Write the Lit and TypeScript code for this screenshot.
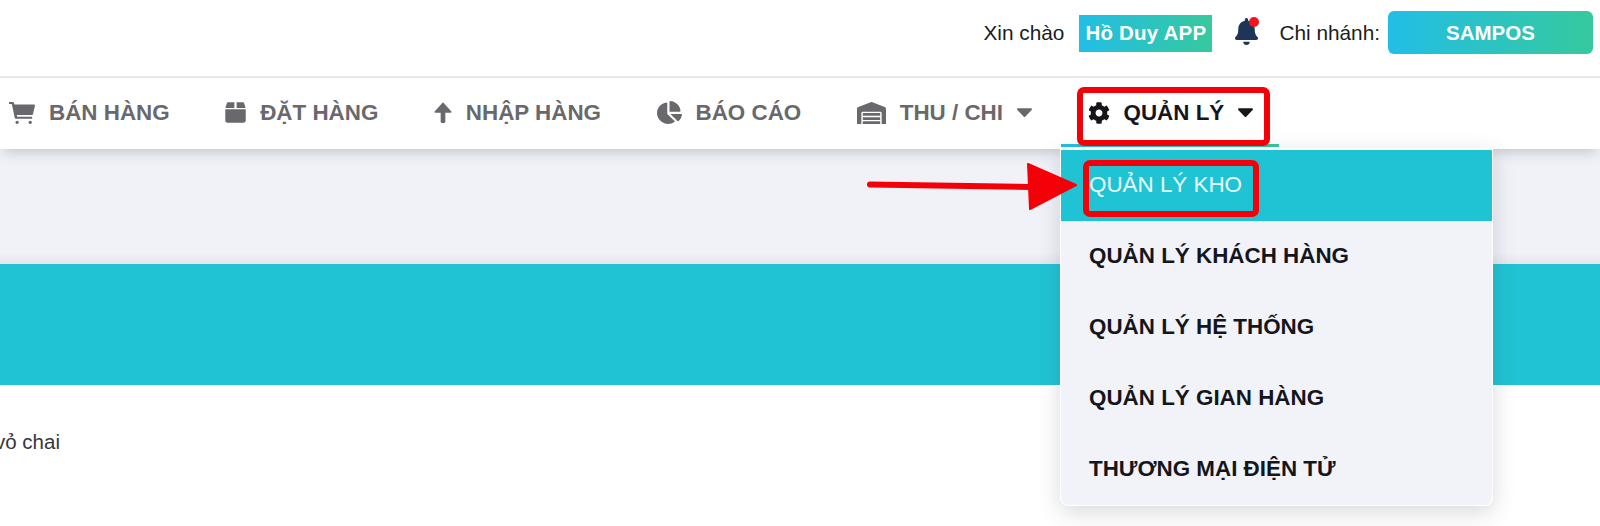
import { LitElement, html, css, svg } from "lit";
import { customElement } from "lit/decorators.js";

const P = {
  cart: "M0 0h88c10 0 17 6 20 16l12 40h436c14 0 22 12 19 26l-42 200c-3 13-12 22-26 22H172l10 40h330v44H148c-10 0-17-6-20-16L62 44H0zM180 436a38 38 0 1 1 0 76a38 38 0 1 1 0-76zM470 436a38 38 0 1 1 0 76a38 38 0 1 1 0-76z",
  box: "M70 24h130v130H8l30-100c5-18 16-30 32-30zM248 24h130c16 0 27 12 32 30l30 100H248zM6 184h436v250c0 30-20 50-50 50H56c-30 0-50-20-50-50z",
  up: "M224 24L432 236c10 12 3 30-13 30H282v200c0 22-18 36-36 36h-44c-18 0-36-14-36-36V266H29c-16 0-23-18-13-30z",
  pie: "M527.79 288H290.5l158.03 158.03c6.04 6.04 15.98 6.53 22.19.68 38.7-36.46 65.32-85.61 73.13-140.86 1.34-9.46-6.51-17.85-16.06-17.85zm-15.83-64.8C503.72 103.74 408.26 8.28 288.8.04 279.68-.59 272 7.1 272 16.24V240h223.77c9.14 0 16.82-7.68 16.19-16.8zM224 288V50.71c0-9.55-8.39-17.4-17.84-16.06C86.99 51.49-4.1 155.6.14 280.37 4.5 408.51 114.83 513.59 243.03 511.98c50.4-.63 96.97-16.87 135.26-44.03 7.9-5.6 8.42-17.23 1.57-24.08L224 288z",
  garage: "M504 352H136.4c-4.4 0-8 3.6-8 8l-.1 48c0 4.4 3.6 8 8 8H504c4.4 0 8-3.6 8-8v-48c0-4.4-3.6-8-8-8zm0 96H136.1c-4.4 0-8 3.6-8 8l-.1 48c0 4.4 3.6 8 8 8h368c4.4 0 8-3.6 8-8v-48c0-4.4-3.6-8-8-8zm0-192H136.6c-4.4 0-8 3.6-8 8l-.1 48c0 4.4 3.6 8 8 8H504c4.4 0 8-3.6 8-8v-48c0-4.4-3.6-8-8-8zm106.5-139L338.4 3.7a48.15 48.15 0 0 0-36.9 0L29.5 117C11.7 124.5 0 141.9 0 161.3V504c0 4.4 3.6 8 8 8h80c4.4 0 8-3.6 8-8V256c0-17.6 14.6-32 32.6-32h382.8c18 0 32.6 14.4 32.6 32v248c0 4.4 3.6 8 8 8h80c4.4 0 8-3.6 8-8V161.3c0-19.4-11.7-36.8-29.5-44.3z",
  cog: "M487.4 315.7l-42.6-24.6c4.3-23.2 4.3-47 0-70.2l42.6-24.6c4.9-2.8 7.1-8.6 5.5-14-11.1-35.6-30-67.8-54.7-94.6-3.8-4.1-10-5.1-14.8-2.3L380.8 110c-17.9-15.4-38.5-27.3-60.8-35.1V25.8c0-5.6-3.9-10.5-9.4-11.7-36.7-8.2-74.3-7.8-109.2 0-5.5 1.2-9.4 6.1-9.4 11.7V75c-22.2 7.9-42.8 19.8-60.8 35.1L88.7 85.5c-4.9-2.8-11-1.9-14.8 2.3-24.7 26.7-43.6 58.9-54.7 94.6-1.7 5.4.6 11.2 5.5 14L67.3 221c-4.3 23.2-4.3 47 0 70.2l-42.6 24.6c-4.9 2.8-7.1 8.6-5.5 14 11.1 35.6 30 67.8 54.7 94.6 3.8 4.1 10 5.1 14.8 2.3l42.6-24.6c17.9 15.4 38.5 27.3 60.8 35.1v49.2c0 5.6 3.9 10.5 9.4 11.7 36.7 8.2 74.3 7.8 109.2 0 5.5-1.2 9.4-6.1 9.4-11.7v-49.2c22.2-7.9 42.8-19.8 60.8-35.1l42.6 24.6c4.9 2.8 11 1.9 14.8-2.3 24.7-26.7 43.6-58.9 54.7-94.6 1.5-5.5-.7-11.3-5.6-14.1zM256 336c-44.1 0-80-35.9-80-80s35.9-80 80-80 80 35.9 80 80-35.9 80-80 80z",
  bell: "M224 512c35.32 0 63.97-28.65 63.97-64H160.03c0 35.35 28.65 64 63.97 64zm215.39-149.71c-19.32-20.76-55.47-51.99-55.47-154.29 0-77.7-54.48-139.9-127.94-155.16V32c0-17.67-14.32-32-31.98-32s-31.98 14.33-31.98 32v20.84C118.56 68.1 64.08 130.3 64.08 208c0 102.3-36.15 133.53-55.47 154.29-6 6.45-8.66 14.16-8.61 21.71.11 16.4 12.98 32 32.1 32h383.8c19.12 0 32-15.6 32.1-32 .05-7.55-2.61-15.27-8.61-21.71z",
  caret: "M31.3 192h257.3c17.8 0 26.7 21.5 14.1 34.1L174.1 354.8c-7.8 7.8-20.5 7.8-28.3 0L17.2 226.1C4.6 213.5 13.5 192 31.3 192z",
};

const icon = (d: string, vb: string, w: number, h: number) => html`<svg
  class="ic"
  viewBox=${vb}
  width=${w}
  height=${h}
  preserveAspectRatio="none"
  fill="currentColor"
>${svg`<path d=${d}></path>`}</svg>`;

const caret = () => icon(P.caret, "10 188 300 172", 15, 9);

@customElement("app-root")
export class AppRoot extends LitElement {
  static styles = css`
    :host {
      display: block;
      font-family: "Liberation Sans", Arial, sans-serif;
    }
    .page {
      position: relative;
      height: 526px;
      overflow: hidden;
      background: #fff;
    }
    .top {
      box-sizing: border-box;
      height: 78px;
      border-bottom: 2px solid #e9e9ec;
      display: flex;
      align-items: center;
      justify-content: flex-end;
      padding: 0 7px 10px 0;
      font-size: 20.8px;
      color: #1c1c22;
    }
    .grad {
      background: linear-gradient(90deg, #22bee6, #36c99d);
      color: #fff;
      font-weight: 700;
      font-size: 20.5px;
    }
    .who {
      margin-left: 15px;
      width: 133px;
      height: 37px;
      display: flex;
      align-items: center;
      justify-content: center;
      letter-spacing: 0.2px;
    }
    .bell {
      position: relative;
      margin-left: 23px;
      margin-right: 21px;
      width: 23px;
      height: 27px;
      color: #1d3557;
      margin-top: -3px;
      display: flex;
    }
    .dot {
      position: absolute;
      left: 14px;
      top: -1px;
      width: 10px;
      height: 10px;
      border-radius: 50%;
      background: #f5141e;
    }
    .branch {
      margin-left: 8px;
      width: 205px;
      height: 43px;
      border-radius: 6px;
      display: flex;
      align-items: center;
      justify-content: center;
      margin-top: -1px;
    }
    .nav {
      position: relative;
      z-index: 1;
      box-sizing: border-box;
      height: 71px;
      padding: 0 0 2px 9px;
      background: #fff;
      box-shadow: 0 7px 12px -4px rgba(60, 64, 80, 0.26);
      display: flex;
      align-items: center;
      gap: 55.5px;
      font-size: 22.4px;
      font-weight: 700;
      color: #68686d;
    }
    .item {
      position: relative;
      display: flex;
      align-items: center;
      gap: 14px;
      white-space: nowrap;
    }
    .item .ic {
      flex: none;
    }
    .active {
      color: #14161c;
    }
    .active::after {
      content: "";
      position: absolute;
      left: -27px;
      right: -26px;
      top: 44px;
      height: 3px;
      background: linear-gradient(90deg, #22bee6, #36c99d);
    }
    .gapfill {
      height: 115px;
      background: linear-gradient(#f0f2f8 90%, #e4e6eb);
    }
    .band {
      height: 121px;
      background: #20c3d3;
    }
    .note {
      margin: 0;
      padding-top: 45px;
      margin-left: -5px;
      font-size: 20.5px;
      color: #34363c;
    }
    .menu {
      position: absolute;
      z-index: 2;
      left: 1060px;
      top: 148px;
      width: 433px;
      height: 358px;
      box-sizing: border-box;
      border: 1px solid #fff;
      border-top-width: 2px;
      background: #f1f3f9;
      border-radius: 0 0 8px 8px;
      box-shadow: 0 6px 22px rgba(60, 64, 80, 0.2);
      font-size: 22.4px;
      font-weight: 700;
      color: #14161c;
    }
    .mi {
      height: 71px;
      box-sizing: border-box;
      padding: 0 0 1px 28px;
      display: flex;
      align-items: center;
    }
    .mi.on {
      background: #20c3d3;
      color: #e8fbfd;
      font-weight: 400;
    }
    .mark {
      position: absolute;
      z-index: 3;
      box-sizing: border-box;
      border: 6px solid #f40008;
      border-radius: 7px;
    }
    .m1 {
      left: 1077px;
      top: 87px;
      width: 193px;
      height: 59px;
    }
    .m2 {
      left: 1083px;
      top: 160px;
      width: 176px;
      height: 57px;
    }
    .arrow {
      position: absolute;
      z-index: 3;
      left: 860px;
      top: 155px;
    }
  `;

  render() {
    return html`<div class="page">
      <header class="top">
        <span>Xin chào</span>
        <span class="who grad">Hồ Duy APP</span>
        <span class="bell">${icon(P.bell, "0 0 448 512", 23, 27)}<i class="dot"></i></span>
        <span>Chi nhánh:</span>
        <span class="branch grad">SAMPOS</span>
      </header>
      <nav class="nav">
        <div class="item">${icon(P.cart, "0 0 576 512", 26, 22)}<span>BÁN HÀNG</span></div>
        <div class="item">${icon(P.box, "0 20 448 470", 21, 21)}<span>ĐẶT HÀNG</span></div>
        <div class="item">${icon(P.up, "0 20 448 480", 18, 21)}<span>NHẬP HÀNG</span></div>
        <div class="item">${icon(P.pie, "0 0 544 512", 25, 23)}<span>BÁO CÁO</span></div>
        <div class="item">${icon(P.garage, "0 0 640 512", 29, 22)}<span>THU / CHI</span>${caret()}</div>
        <div class="item active">${icon(P.cog, "0 0 512 512", 22, 22)}<span>QUẢN LÝ</span>${caret()}</div>
      </nav>
      <div class="gapfill"></div>
      <div class="band"></div>
      <p class="note">vỏ chai</p>
      <div class="menu">
        <div class="mi on">QUẢN LÝ KHO</div>
        <div class="mi">QUẢN LÝ KHÁCH HÀNG</div>
        <div class="mi">QUẢN LÝ HỆ THỐNG</div>
        <div class="mi">QUẢN LÝ GIAN HÀNG</div>
        <div class="mi">THƯƠNG MẠI ĐIỆN TỬ</div>
      </div>
      <div class="mark m1"></div>
      <div class="mark m2"></div>
      <svg class="arrow" width="220" height="60" viewBox="0 0 220 60">
        <path d="M10 29.5L172 32" stroke="#f40008" stroke-width="6" stroke-linecap="round" fill="none"></path>
        <path d="M168 9L216 30L170 54Z" fill="#f40008" stroke="#f40008" stroke-width="2" stroke-linejoin="round"></path>
      </svg>
    </div>`;
  }
}
